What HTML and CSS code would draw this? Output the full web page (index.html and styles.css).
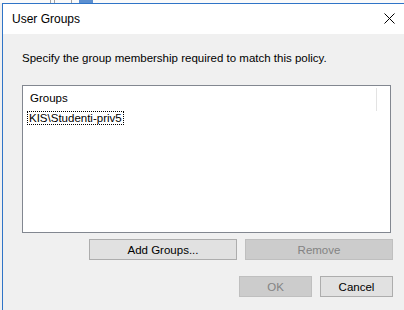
FILE: index.html
```html
<!DOCTYPE html>
<html>
<head>
<meta charset="utf-8">
<link rel="stylesheet" href="styles.css">
</head>
<body>
<div class="backdrop">
  <span class="bg-line l1"></span>
  <span class="bg-line l2"></span>
  <span class="bg-line l3"></span>
  <span class="bg-icon"></span>
</div>
<div class="dialog">
  <div class="titlebar">
    <span class="title">User Groups</span>
    <svg class="close" width="11" height="11" viewBox="0 0 11 11"><path d="M0.5 0.5 L10.5 10.5 M10.5 0.5 L0.5 10.5" stroke="#000" stroke-width="1" fill="none"/></svg>
  </div>
  <div class="body">
    <p class="prompt">Specify the group membership required to match this policy.</p>
    <div class="listbox">
      <div class="header"><span class="col">Groups</span><span class="sep"></span></div>
      <div class="item"><span class="focus">KIS\Studenti-priv5</span></div>
    </div>
    <div class="row list-actions">
      <button class="btn wide">Add Groups...</button>
      <button class="btn wide disabled">Remove</button>
    </div>
    <div class="row dialog-actions">
      <button class="btn small disabled">OK</button>
      <button class="btn small">Cancel</button>
    </div>
  </div>
</div>
</body>
</html>
```
FILE: styles.css
```css
html, body {
  margin: 0;
  padding: 0;
  width: 404px;
  height: 310px;
  overflow: hidden;
  background: #f0f0f0;
  font-family: "Liberation Sans", Arial, sans-serif;
  font-size: 11.5px;
  color: #000;
}
.backdrop {
  height: 3px;
  display: flex;
  background: #fafafa;
}
.bg-line { width: 1px; background: #a0a0a0; }
.l1 { margin-left: 50px; }
.l2 { margin-left: 3px; }
.l3 { margin-left: 16px; }
.bg-icon { width: 14px; margin-left: 7px; background: #5b8fd0; }
.dialog {
  margin-left: 2px;
  height: 307px;
  border-left: 1px solid #2f74c7;
  border-top: 1px solid #2f74c7;
  background: #f0f0f0;
  display: flex;
  flex-direction: column;
}
.titlebar {
  height: 30px;
  background: #fff;
  display: flex;
  align-items: center;
  justify-content: space-between;
  padding: 0 9px 0 9px;
}
.title { font-size: 12px; margin-top: -1px; }
.close { margin-top: -1px; }
.body {
  padding: 0 11px 0 19px;
  display: flex;
  flex-direction: column;
}
.prompt {
  margin: 17px 0 0 0;
  line-height: 14px;
}
.listbox {
  margin-top: 20px;
  width: 367px;
  height: 146px;
  border: 1px solid #828790;
  background: #fff;
}
.header {
  display: flex;
  height: 24px;
  margin-top: 1px;
  align-items: center;
}
.col { width: 353px; padding-left: 7px; box-sizing: border-box; margin-top: -3px; }
.sep { width: 1px; height: 23px; background: #e3e3e3; }
.item {
  padding-left: 4px;
  height: 16px;
}
.focus {
  display: inline-block;
  border: 1px dotted #000;
  padding: 0 1px 0 1px;
  line-height: 12px;
  height: 12px;
}
.row { display: flex; justify-content: flex-end; gap: 8px; }
.list-actions { margin-top: 6px; }
.dialog-actions { margin-top: 16px; }
.btn {
  font: inherit;
  background: #e1e1e1;
  border: 1px solid #adadad;
  color: #000;
  padding: 0;
  height: 21px;
  margin: 0;
}
.btn.wide { width: 148px; }
.btn.small { width: 73px; }
.btn.disabled {
  background: #cccccc;
  border-color: #bfbfbf;
  color: #838383;
}
```
